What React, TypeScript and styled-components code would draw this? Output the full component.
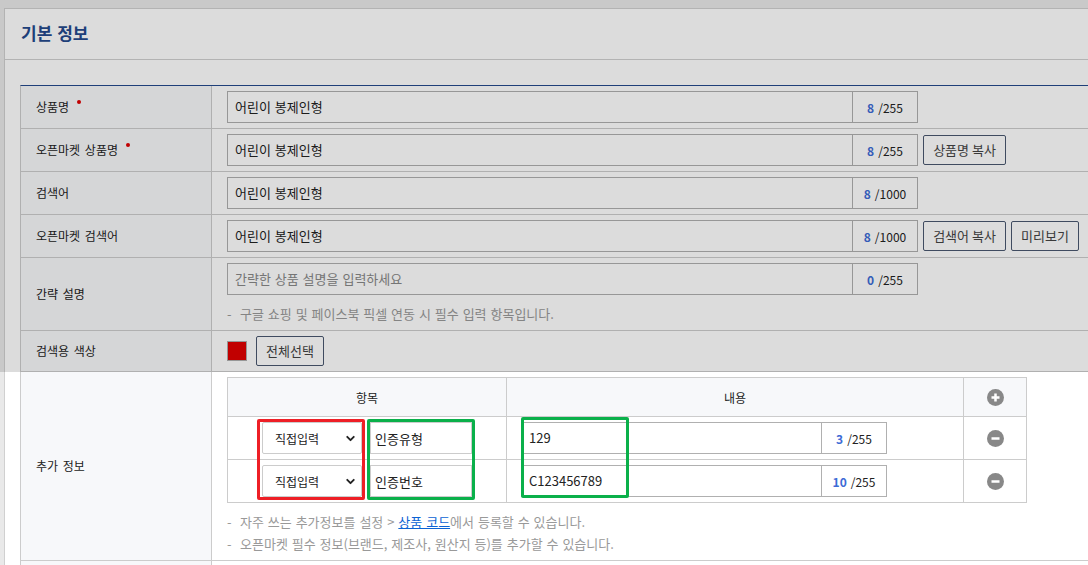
import React from 'react';
import styled, { createGlobalStyle } from 'styled-components';
import { ChevronDown } from 'lucide-react';

const GlobalStyle = createGlobalStyle`
  html, body {
    margin: 0;
    padding: 0;
    background: #e9e9e9;
    overflow: hidden;
  }
  body {
    font-family: 'Noto Sans CJK KR', 'Noto Sans', sans-serif;
    font-size: 12px;
    color: #222;
  }
  * {
    box-sizing: border-box;
  }
`;

const Page = styled.div`
  position: relative;
  padding: 8px 0 0 4px;
  height: 565px;
`;

// dimmed area above the highlighted row
const Dim = styled.div`
  position: absolute;
  top: 0;
  left: 0;
  right: 0;
  height: 372px;
  background: rgba(0, 0, 0, 0.137);
  pointer-events: none;
  z-index: 5;
`;

const Panel = styled.section`
  width: 1200px;
  background: #fff;
  border-top: 1px solid #d0d0d0;
  border-left: 1px solid #d0d0d0;
`;

const PanelHeader = styled.h2`
  margin: 0;
  height: 51px;
  line-height: 48px;
  padding-left: 16px;
  border-bottom: 1px solid #d0d0d0;
  font-size: 17px;
  font-weight: 700;
  color: #24498d;
  word-spacing: 1px;
`;

const PanelBody = styled.div`
  padding: 25px 0 0 15px;
`;

const FormTable = styled.div`
  border-top: 1px solid #24498d;
  border-left: 1px solid #cccccc;
`;

const Row = styled.div`
  display: flex;
  border-bottom: 1px solid #cccccc;
`;

const Label = styled.div`
  width: 191px;
  flex-shrink: 0;
  display: flex;
  align-items: center;
  padding: 0 0 2px 15px;
  background: #f7f8fa;
  border-right: 1px solid #cccccc;
  color: #222;
  font-size: 12px;
  word-spacing: 2px;
`;

const Required = styled.span`
  display: inline-block;
  width: 4px;
  height: 4px;
  border-radius: 50%;
  background: #e00000;
  margin-left: 8px;
  margin-top: -9px;
`;

const Value = styled.div<{ $tall?: boolean }>`
  flex: 1;
  min-height: ${(p) => (p.$tall ? '42px' : '40px')};
  padding: 5px 15px;
  display: flex;
  flex-direction: ${(p) => (p.$tall ? 'column' : 'row')};
  align-items: ${(p) => (p.$tall ? 'flex-start' : 'center')};
  justify-content: ${(p) => (p.$tall ? 'center' : 'flex-start')};
`;

const Line = styled.div`
  display: flex;
  align-items: center;
  gap: 5px;
`;

const InputGroup = styled.div<{ $width: number }>`
  display: flex;
  width: ${(p) => p.$width}px;
  height: 32px;
  border: 1px solid #b0b0b0;
  background: #fff;
`;

const InputText = styled.div<{ $placeholder?: boolean }>`
  flex: 1;
  display: flex;
  align-items: center;
  padding: 0 0 1px 7px;
  font-size: 13px;
  word-spacing: 1px;
  color: ${(p) => (p.$placeholder ? '#888' : '#222')};
  white-space: pre;
`;

const CounterBox = styled.div`
  width: 65px;
  flex-shrink: 0;
  border-left: 1px solid #b0b0b0;
  display: flex;
  align-items: center;
  justify-content: center;
  gap: 4px;
  color: #222;
  font-size: 12px;
`;

const CountNum = styled.b`
  color: #3d6bd6;
  font-weight: 700;
`;

const Button = styled.button<{ $width: number }>`
  width: ${(p) => p.$width}px;
  height: 30px;
  padding: 0 0 1px;
  border: 1px solid #4a5870;
  border-radius: 2px;
  background: #fff;
  color: #444;
  font-family: inherit;
  font-size: 13px;
`;

const Hint = styled.p`
  margin: 0;
  line-height: 22px;
  color: #999;
  font-size: 13px;
  word-spacing: 1px;
  white-space: nowrap;
  &::before {
    content: '-';
    display: inline-block;
    width: 13px;
  }
`;

const HintGroup = styled.div`
  margin-top: 8px;
`;

const LinkText = styled.a`
  color: #0b63d4;
  text-decoration: underline;
`;

const Swatch = styled.span`
  width: 20px;
  height: 20px;
  background: #e00000;
  border: 1px solid #b0b0b0;
  margin-right: 4px;
`;

const SubTable = styled.div`
  position: relative;
  display: grid;
  grid-template-columns: 279px 457px 63px;
  width: 800px;
  border-top: 1px solid #cccccc;
  border-left: 1px solid #cccccc;
`;

const Cell = styled.div<{ $head?: boolean }>`
  height: ${(p) => (p.$head ? '39px' : '43px')};
  border-right: 1px solid #cccccc;
  border-bottom: 1px solid #cccccc;
  background: ${(p) => (p.$head ? '#f7f8fa' : '#fff')};
  display: flex;
  align-items: center;
  justify-content: center;
  color: #222;
  font-size: 12px;
`;

const ContentCell = styled(Cell)`
  justify-content: flex-start;
  padding-left: 14px;
`;

const PairCell = styled(Cell)`
  gap: 8px;
`;

const SelectBox = styled.div`
  width: 100px;
  height: 32px;
  border: 1px solid #cccccc;
  border-radius: 2px;
  background: #fff;
  display: flex;
  align-items: center;
  justify-content: space-between;
  padding: 0 4px 0 12px;
  color: #222;
  font-size: 12px;
`;

const SmallInput = styled.div`
  width: 102px;
  height: 32px;
  border: 1px solid #cccccc;
  display: flex;
  align-items: center;
  padding-left: 4px;
  color: #222;
  font-size: 13px;
`;

// annotation frames drawn over the sub table
const Mark = styled.div<{ $color: string; $left: number; $top: number }>`
  position: absolute;
  left: ${(p) => p.$left}px;
  top: ${(p) => p.$top}px;
  width: 108px;
  height: 81px;
  border: 3px solid ${(p) => p.$color};
  border-radius: 2px;
  pointer-events: none;
`;

const CircleIcon = ({ plus }: { plus?: boolean }) => (
  <svg width="17" height="17" viewBox="0 0 17 17">
    <circle cx="8.5" cy="8.5" r="8.5" fill="#888" />
    <rect x="4.5" y="7.25" width="8" height="2.5" fill="#fff" />
    {plus && <rect x="7.25" y="4.5" width="2.5" height="8" fill="#fff" />}
  </svg>
);

const Counter = ({ count, max }: { count: number; max: number }) => (
  <CounterBox>
    <CountNum>{count}</CountNum>
    <span>/{max}</span>
  </CounterBox>
);

const TextField = ({ value, count, max, placeholder }: { value: string; count: number; max: number; placeholder?: boolean }) => (
  <InputGroup $width={691}>
    <InputText $placeholder={placeholder}>{value}</InputText>
    <Counter count={count} max={max} />
  </InputGroup>
);

const extraRows = [
  { name: '인증유형', value: '129', count: 3 },
  { name: '인증번호', value: 'C123456789', count: 10 },
];

export default function App() {
  return (
    <>
      <GlobalStyle />
      <Page>
        <Panel>
          <PanelHeader>기본 정보</PanelHeader>
          <PanelBody>
            <FormTable>
              <Row>
                <Label>
                  상품명<Required />
                </Label>
                <Value>
                  <TextField value="어린이 봉제인형" count={8} max={255} />
                </Value>
              </Row>
              <Row>
                <Label>
                  오픈마켓 상품명<Required />
                </Label>
                <Value>
                  <Line>
                    <TextField value="어린이 봉제인형" count={8} max={255} />
                    <Button $width={83}>상품명 복사</Button>
                  </Line>
                </Value>
              </Row>
              <Row>
                <Label>검색어</Label>
                <Value>
                  <TextField value="어린이 봉제인형" count={8} max={1000} />
                </Value>
              </Row>
              <Row>
                <Label>오픈마켓 검색어</Label>
                <Value>
                  <Line>
                    <TextField value="어린이 봉제인형" count={8} max={1000} />
                    <Button $width={83}>검색어 복사</Button>
                    <Button $width={68}>미리보기</Button>
                  </Line>
                </Value>
              </Row>
              <Row>
                <Label>간략 설명</Label>
                <Value $tall>
                  <TextField value="간략한 상품 설명을 입력하세요" count={0} max={255} placeholder />
                  <HintGroup>
                    <Hint>구글 쇼핑 및 페이스북 픽셀 연동 시 필수 입력 항목입니다.</Hint>
                  </HintGroup>
                </Value>
              </Row>
              <Row>
                <Label>검색용 색상</Label>
                <Value>
                  <Line>
                    <Swatch />
                    <Button $width={68}>전체선택</Button>
                  </Line>
                </Value>
              </Row>
              <Row>
                <Label>추가 정보</Label>
                <Value $tall>
                  <SubTable>
                    <Cell $head>항목</Cell>
                    <Cell $head>내용</Cell>
                    <Cell $head>
                      <CircleIcon plus />
                    </Cell>
                    {extraRows.map((r) => (
                      <React.Fragment key={r.name}>
                        <PairCell>
                          <SelectBox>
                            직접입력
                            <ChevronDown size={13} strokeWidth={3.5} color="#222" />
                          </SelectBox>
                          <SmallInput>{r.name}</SmallInput>
                        </PairCell>
                        <ContentCell>
                          <InputGroup $width={366}>
                            <InputText>{r.value}</InputText>
                            <Counter count={r.count} max={255} />
                          </InputGroup>
                        </ContentCell>
                        <Cell>
                          <CircleIcon />
                        </Cell>
                      </React.Fragment>
                    ))}
                    <Mark $color="#ee1f26" $left={29} $top={41} />
                    <Mark $color="#0ab04a" $left={139} $top={41} />
                    <Mark $color="#0ab04a" $left={293} $top={39} />
                  </SubTable>
                  <HintGroup>
                    <Hint>
                      자주 쓰는 추가정보를 설정 &gt; <LinkText>상품 코드</LinkText>에서 등록할 수 있습니다.
                    </Hint>
                    <Hint>오픈마켓 필수 정보(브랜드, 제조사, 원산지 등)를 추가할 수 있습니다.</Hint>
                  </HintGroup>
                </Value>
              </Row>
              <Row>
                <Label />
                <Value />
              </Row>
            </FormTable>
          </PanelBody>
        </Panel>
        <Dim />
      </Page>
    </>
  );
}
